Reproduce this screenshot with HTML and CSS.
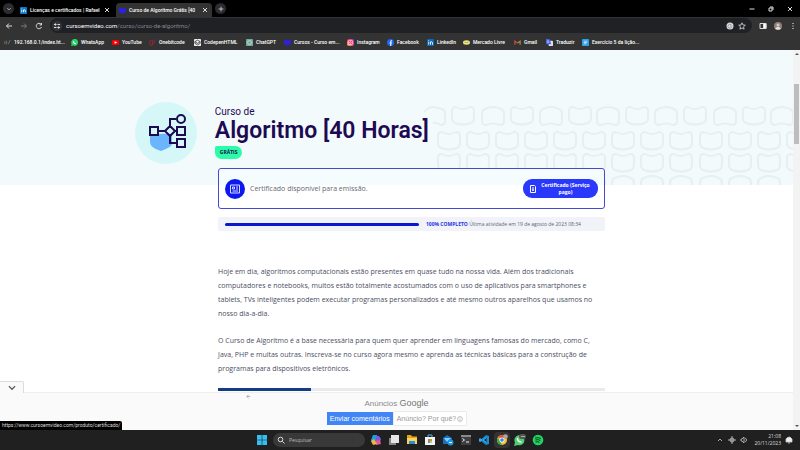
FILE: index.html
```html
<!DOCTYPE html>
<html lang="pt-BR">
<head>
<meta charset="utf-8">
<title>Curso de Algoritmo Grátis</title>
<link rel="stylesheet" href="styles.css">
</head>
<body>
<header class="browser">
  <nav class="tabs">
    <button class="round" aria-label="Pesquisar guias"><svg viewBox="0 0 10 10"><path d="M3 4l2 2 2-2"/></svg></button>
    <div class="tab"><svg class="fav" viewBox="0 0 8 8"><rect width="8" height="8" rx="1" fill="#0a78c8"/><path d="M2 3v3M4 6V3M4 4q2-2 2 0v2M2 1.500v.5" stroke="#fff"/></svg><span class="tab-title">Licenças e certificados | Rafael</span><button class="close" aria-label="Fechar guia"><svg viewBox="0 0 6 6"><path d="M1 1l4 4M5 1l-4 4"/></svg></button></div>
    <div class="tab active"><svg class="fav" viewBox="0 0 8 8"><path d="M0 1l4 .5L8 1v5L4 7.500 0 6z" fill="#2d20e0"/></svg><span class="tab-title">Curso de Algoritmo Grátis [40</span><button class="close" aria-label="Fechar guia"><svg viewBox="0 0 6 6"><path d="M1 1l4 4M5 1l-4 4"/></svg></button></div>
    <button class="round" aria-label="Nova guia"><svg viewBox="0 0 10 10"><path d="M5 2v6M2 5h6"/></svg></button>
    <div class="window-buttons">
      <button aria-label="Minimizar"><svg viewBox="0 0 6 6"><path d="M.5 3h5"/></svg></button>
      <button aria-label="Restaurar"><svg viewBox="0 0 6 6"><path d="M1 2h3v3H1zM2 1h3v3"/></svg></button>
      <button aria-label="Fechar"><svg viewBox="0 0 6 6"><path d="M1 1l4 4M5 1L1 5"/></svg></button>
    </div>
  </nav>
  <div class="toolbar">
    <button aria-label="Voltar"><svg viewBox="0 0 8 8"><path d="M7 4H1.500M4 1.500L1.500 4 4 6.500"/></svg></button>
    <button class="dim" aria-label="Avançar"><svg viewBox="0 0 8 8"><path d="M1 4h5.500M4 1.500L6.500 4 4 6.500"/></svg></button>
    <button aria-label="Recarregar"><svg viewBox="0 0 8 8"><path d="M6.500 5A2.700 2.700 0 1 1 6 2.200M6.500 1v2H4.500"/></svg></button>
    <div class="address">
      <svg class="site" viewBox="0 0 10 10"><circle cx="5" cy="5" r="5" fill="#35363a" stroke="none"/><path d="M2 3.500h2M5.500 3.500H8M2 6.500h2.500M6 6.500h2"/><circle cx="3.500" cy="3.500" r=".7"/><circle cx="6.500" cy="6.500" r=".7"/></svg>
      <a class="url" href="#">cursoemvideo.com<span>/curso/curso-de-algoritmo/</span></a>
      <svg class="small" viewBox="0 0 8 8"><circle cx="4" cy="4" r="3.500" fill="#ddd" stroke="none"/><path d="M5.500 3A2 2 0 1 0 5.800 5" stroke="#8a9cb8"/><path d="M4 4h2.500" stroke="#c08a80"/></svg>
      <svg class="small" viewBox="0 0 8 8"><path d="M4 .8l1 2.200 2.300.2-1.800 1.600.6 2.400L4 5.900 1.900 7.200l.6-2.400L.7 3.200 3 3z" stroke-width=".8"/></svg>
    </div>
    <button aria-label="Painel lateral"><svg viewBox="0 0 8 8"><path d="M1 1.500h6v5H1z"/><path d="M4.500 1.500H7v5H4.500z" fill="#fff"/></svg></button>
    <button class="profile" aria-label="Perfil"><svg viewBox="0 0 8 8"><circle cx="4" cy="4" r="4" fill="#8d817c" stroke="none"/><circle cx="4" cy="3" r="1.500" fill="#e6c4b0" stroke="none"/><path d="M1 6.700q3-4 6 0Q4 9 1 6.700" fill="#e4dfdc" stroke="none"/></svg></button>
    <button aria-label="Menu"><svg viewBox="0 0 8 8"><path d="M4 1v1M4 3.500v1M4 6v1" stroke-width="1.200"/></svg></button>
  </div>
  <nav class="bookmarks">
    <a href="#"><svg viewBox="0 0 8 8"><path d="M1 2v4M3 2v4M5 6l2-5" stroke="#7d8a86" stroke-width=".8"/></svg>192.168.0.1/index.ht...</a>
    <a href="#"><svg viewBox="0 0 8 8"><path d="M0 8l.7-2.200A4 4 0 1 1 2.500 7.500z" fill="#25d366"/><path d="M2.700 2.500q0 3 3 3" stroke="#fff" stroke-width="1.200"/></svg>WhatsApp</a>
    <a href="#"><svg viewBox="0 0 8 8"><rect y="1.200" width="8" height="5.600" rx="1.500" fill="#f00"/><path d="M3 2.500l3 1.500-3 1.500z" fill="#fff"/></svg>YouTube</a>
    <a href="#"><svg viewBox="0 0 8 8"><path d="M1 2h3v5H1zM5 1h1v5" stroke="#9d2635"/></svg>Onebitcode</a>
    <a href="#"><svg viewBox="0 0 8 8"><rect width="8" height="8" rx="1" fill="#eee"/><path d="M4 1.300L7 3v2L4 6.700 1 5V3zM1 3l3 2 3-2" stroke="#222" stroke-width=".8"/></svg>CodepenHTML</a>
    <a href="#"><svg viewBox="0 0 8 8"><rect width="8" height="8" rx="1" fill="#74aa9c"/><circle cx="4" cy="4" r="2.200" stroke="#c5e0d8"/></svg>ChatGPT</a>
    <a href="#"><svg viewBox="0 0 8 8"><path d="M0 1l4 .5L8 1v5L4 7.500 0 6z" fill="#2d20e0"/></svg>Cursos - Curso em...</a>
    <a href="#"><svg viewBox="0 0 8 8"><defs><linearGradient id="ig" x1="0" y1="1" x2="1" y2="0"><stop stop-color="#ffb43b"/><stop offset=".5" stop-color="#f22e6b"/><stop offset="1" stop-color="#a534c4"/></linearGradient></defs><rect width="8" height="8" rx="2" fill="url(#ig)"/><rect x="1.500" y="1.500" width="5" height="5" rx="1.500" stroke="#fff" stroke-width=".8"/><circle cx="4" cy="4" r="1" stroke="#fff" stroke-width=".7"/></svg>Instagram</a>
    <a href="#"><svg viewBox="0 0 8 8"><circle cx="4" cy="4" r="4" fill="#1769ff"/><path d="M5.800 2Q4.300 1.700 4.300 3v5M3 4.500h2.500" stroke="#fff" stroke-width="1.200"/></svg>Facebook</a>
    <a href="#"><svg viewBox="0 0 8 8"><rect width="8" height="8" rx="1" fill="#0a68b8"/><path d="M2 3v3.500M4 6.500V3M4 4q2-2 2.300 0v2.500M2 1.300v.8" stroke="#fff"/></svg>LinkedIn</a>
    <a href="#"><svg viewBox="0 0 8 8"><ellipse cx="4" cy="4" rx="4" ry="2.500" fill="#f4e67a"/><path d="M1.500 3.500Q4 5 6.500 3.500" stroke="#8a907c" stroke-width=".8"/></svg>Mercado Livre</a>
    <a href="#"><svg viewBox="0 0 8 8"><path d="M1 6.500v-4L4 4.700" stroke="#dc4b3e" stroke-width="1.300"/><path d="M4 4.700l3-2.200v4" stroke="#b78e35" stroke-width="1.300"/></svg>Gmail</a>
    <a href="#"><svg viewBox="0 0 8 8"><rect x="3" y="2" width="5" height="6" rx="1" fill="#e0e2e8"/><path d="M0 0h4l2 6H0z" fill="#4565e8"/><path d="M3.500 2.500q-2-1.500-2 .5t2 .7" stroke="#fff" stroke-width=".6"/></svg>Traduzir</a>
    <a href="#"><svg viewBox="0 0 8 8"><rect width="8" height="8" rx="1" fill="#2c9fe8"/><path d="M2 2.500h4M2 4h4M2 5.500h3" stroke="#e8f7ff" stroke-width=".8"/></svg>Exercício 5 da lição...</a>
  </nav>
</header>

<div class="viewport">
  <main class="page">
    <section class="hero">
      <svg class="pattern" viewBox="0 0 370 79" aria-hidden="true">
        <defs>
          <path id="cup" d="M4 1Q11 5 18 1q4 0 4 4v7q0 4-3 5-8 3-16 0-3-1-3-5V5q0-4 4-4z"/>
          <path id="cap" d="M4 19Q11 16 18 19q4 0 4-4V8q0-4-3-5-8-4-16 0Q0 4 0 8v7q0 4 4 4z"/>
          <g id="row"><use href="#cup"/><use href="#cup" x="29"/><use href="#cup" x="58"/><use href="#cup" x="87"/><use href="#cup" x="116"/><use href="#cup" x="145"/><use href="#cup" x="174"/><use href="#cup" x="203"/><use href="#cup" x="232"/><use href="#cup" x="262"/><use href="#cup" x="291"/><use href="#cup" x="320"/><use href="#cup" x="349"/></g>
        </defs>
        <path d="M1 6q4-5 10-5l8 2q3 1 3 5v7q0 4-4 4-5-3-8-2"/>
        <use href="#cup" x="29"/><use href="#cap" x="59"/><use href="#cup" x="88"/><use href="#cap" x="117"/><use href="#cup" x="146"/><use href="#cap" x="174"/><use href="#cup" x="203"/><use href="#cap" x="232"/><use href="#cup" x="261"/><use href="#cap" x="291"/><use href="#cup" x="320"/><use href="#cap" x="348"/>
        <use href="#row" x="15" y="25"/><use href="#row" x="15" y="47"/>
        <g><use href="#cap" x="15" y="69"/><use href="#cap" x="44" y="69"/><use href="#cap" x="73" y="69"/><use href="#cap" x="102" y="69"/><use href="#cap" x="131" y="69"/><use href="#cap" x="160" y="69"/><use href="#cap" x="189" y="69"/><use href="#cap" x="218" y="69"/><use href="#cap" x="247" y="69"/><use href="#cap" x="277" y="69"/><use href="#cap" x="306" y="69"/><use href="#cap" x="335" y="69"/></g>
      </svg>
      <svg class="course-icon" viewBox="0 0 62 62" aria-hidden="true">
        <circle cx="31" cy="31" r="31" fill="#d5f7f8"/>
        <path d="M15 33q11-2 22-1v10q0 3-11 7-11-3-11-9z" fill="#6bb5ff"/>
        <g fill="none" stroke="#1e0a52" stroke-width="2"><path d="M15 25h8v8h-8zM23 29h7M30 29l5-5 5 5-5 5zM40 29h2M42 25h8v8h-8zM42 37h8v8h-8zM35 24v-7h6M35 34v7h7"/><circle cx="46" cy="17" r="4"/></g>
      </svg>
      <div class="heading"><p>Curso de</p><h1>Algoritmo [40 Horas]</h1><span class="free">GRÁTIS</span></div>
    </section>
    <article class="content">
      <section class="certificate">
        <svg class="cert-icon" viewBox="0 0 20 20"><circle cx="10" cy="10" r="10" fill="#0b19f0"/><path d="M5.500 6h9v8h-9zM7.500 8h2v2h-2zM11 8h2M11 10h2M7.500 12h5.500" fill="none" stroke="#d8dcff"/></svg>
        <p>Certificado disponível para emissão.</p>
        <button><svg viewBox="0 0 8 8"><path d="M1.500.5h4l1 1v6h-5zM4 2v4M3 5h2" fill="none" stroke="#fff"/></svg><span>Certificado (Serviço pago)</span></button>
      </section>
      <section class="progress">
        <div class="track"></div>
        <p><strong>100% COMPLETO</strong> Última atividade em 19 de agosto de 2023 08:34</p>
      </section>
      <div class="text">
        <p>Hoje em dia, algoritmos computacionais estão presentes em quase tudo na nossa vida. Além dos tradicionais<br>computadores e notebooks, muitos estão totalmente acostumados com o uso de aplicativos para smartphones e<br>tablets, TVs inteligentes podem executar programas personalizados e até mesmo outros aparelhos que usamos no<br>nosso dia-a-dia.</p>
        <p>O Curso de Algoritmo é a base necessária para quem quer aprender em linguagens famosas do mercado, como C,<br>Java, PHP e muitas outras. Inscreva-se no curso agora mesmo e aprenda as técnicas básicas para a construção de<br>programas para dispositivos eletrônicos.</p>
      </div>
      <div class="section-line"><span></span></div>
    </article>
    <aside class="ad">
      <button class="collapse" aria-label="Recolher anúncio"><svg viewBox="0 0 8 8"><path d="M1.500 2.500L4 5l2.500-2.500"/></svg></button>
      <svg class="back" viewBox="0 0 6 6"><path d="M1 3h4M3 1L1 3l2 2"/></svg>
      <p class="ad-title">Anúncios <b>Google</b></p>
      <div class="ad-actions"><button class="send">Enviar comentários</button><button class="why">Anúncio? Por quê? <svg viewBox="0 0 6 6"><circle cx="3" cy="3" r="2.400"/><path d="M3 2.500v2M3 1.300v.6"/></svg></button></div>
    </aside>
    <div class="status">https://www.cursoemvideo.com/produto/certificado/</div>
  </main>
  <div class="scroll" aria-hidden="true"><i class="up"></i><span class="thumb"></span><i class="down"></i></div>
</div>

<footer class="taskbar">
  <div class="apps">
    <svg viewBox="0 0 12 12"><path d="M1 1h4.700v4.700H1zM6.300 1H11v4.700H6.300zM1 6.300h4.700V11H1zM6.300 6.300H11V11H6.300z" fill="#35bdf4"/></svg>
    <label class="search"><svg viewBox="0 0 8 8"><circle cx="3.500" cy="3.500" r="2.300"/><path d="M5.300 5.300L7.500 7.500"/></svg><input type="text" placeholder="Pesquisar" aria-label="Pesquisar"></label>
    <svg viewBox="0 0 12 12"><path d="M3 1h4l1 3-4 5H2L1 6z" fill="#1d9de0"/><path d="M6 2h3l2 3-1 3H6z" fill="#7a5be0"/><path d="M5 7l5-1 1 4-5 1z" fill="#e5559a"/><path d="M1 7l3-2 3 5-4 1z" fill="#efb638"/></svg>
    <svg viewBox="0 0 12 12"><path d="M1 4h7v7H1z" fill="#858585"/><path d="M3 1h8v8H3z" fill="#e6e6e6"/></svg>
    <svg viewBox="0 0 12 12"><path d="M1 1h4l1 1.500h5V10H1z" fill="#e5a413"/><path d="M1 4h10v6H1z" fill="#ffd35a"/><path d="M3 7h6v3H3z" fill="#278edb"/></svg>
    <svg viewBox="0 0 12 12"><path d="M4 3V1h4v2" fill="none" stroke="#49b5e8"/><path d="M1 3h10v8H1z" fill="#f4f4f4"/><path d="M4 5h2v2H4z" fill="#ec6547"/><path d="M6 5h2v2H6z" fill="#7fbb42"/><path d="M4 7h2v2H4z" fill="#38a1e8"/><path d="M6 7h2v2H6z" fill="#f3bd3c"/></svg>
    <svg viewBox="0 0 12 12"><path d="M1 4l4-3 5 3v6H1z" fill="#1472c4"/><path d="M2 4h7L5 8z" fill="#8fcdf7"/><circle cx="8.500" cy="8.500" r="3" fill="#1a96e8"/><path d="M7 8.500h3" stroke="#fff"/></svg>
    <svg viewBox="0 0 12 12"><path d="M1 1h10v10H1z" fill="#3c3e42"/><path d="M1 1h10v2H1z" fill="#8a8a8a"/><path d="M2.500 4.500l2 1.500-2 1.500M6 8h3" fill="none" stroke="#eee"/></svg>
    <svg viewBox="0 0 12 12"><path d="M8 1l3 1v8l-3 1-5-4-1.500 1L1 7l6-5z" fill="#168bd2"/><path d="M1 5l1-1 6 5V3L2 8 1 7z" fill="#39a9ef"/><path d="M8.500 4v4L6 6z" fill="#202020"/></svg>
    <span class="running"><svg viewBox="0 0 12 12"><circle cx="6" cy="6" r="5" fill="#f3c52f"/><path d="M1.700 3.500A5 5 0 0 1 10.500 4H6z" fill="#e34a39"/><path d="M1.700 3.500L4 7l2 4A5 5 0 0 1 1.700 3.500" fill="#35a853"/><circle cx="6" cy="6" r="2.500" fill="#fff"/><circle cx="6" cy="6" r="1.800" fill="#3c83ed"/><circle cx="9.500" cy="2.500" r="2.300" fill="#b4a49b"/></svg></span>
    <svg viewBox="0 0 12 12"><path d="M0 12l1-3.500A5 5 0 1 1 4 11z" fill="#4fcf72"/><path d="M3.500 4q0 4 4 4" fill="none" stroke="#fff" stroke-width="1.500"/><rect x="5" width="7" height="5" rx="2.500" fill="#555"/><path d="M7 2.500h4" stroke="#aaa"/></svg>
    <span class="running plain"><svg viewBox="0 0 12 12"><circle cx="6" cy="6" r="5.300" fill="#1ed760"/><path d="M3 4q3-1 6 .5M3.300 6q3-1 5 .5M3.500 8q2.500-.7 4 .3" fill="none" stroke="#173821"/></svg></span>
  </div>
  <div class="tray"><svg viewBox="0 0 8 8"><path d="M2 5l2-2 2 2"/></svg><svg viewBox="0 0 8 8"><circle cx="4" cy="4" r="2"/><path d="M0 4h8M4 0v8"/></svg><svg viewBox="0 0 8 8"><path d="M1 3h1l2-2v6L2 5H1zM5.500 2q2 2 0 4"/></svg><time>21:08<br>20/11/2023</time><svg class="bell" viewBox="0 0 8 8"><path d="M1 6V3q1-2 4-2l2 2v3zM3 7h2" fill="#eee"/></svg></div>
</footer>
</body>
</html>
```
FILE: styles.css
```css
* { box-sizing: border-box; }
body { margin: 0; height: 100vh; display: flex; flex-direction: column; overflow: hidden; font-family: "Open Sans", sans-serif; background: #fff; }
button { border: 0; padding: 0; margin: 0; background: none; color: inherit; font: inherit; display: flex; align-items: center; justify-content: center; }
p, h1 { margin: 0; }
a { color: inherit; text-decoration: none; }
svg { display: block; flex: none; }

.browser { flex: none; color: #fff; background: #333; }
.browser svg { fill: none; }
.browser button svg, .address svg { stroke: #ddd; }
.tabs { height: 17px; background: #000; display: flex; align-items: center; padding: 0 4px 0 3px; }
.round { width: 11px; height: 11px; border-radius: 50%; background: #2b2c2f; }
.round svg { width: 8px; height: 8px; }
.tab { display: flex; align-items: center; gap: 3px; width: 96px; height: 14px; align-self: flex-end; margin-left: 2px; padding: 0 1px 0 4px; font: 500 5px/8px Roboto, sans-serif; }
.tab.active { background: #333; border-radius: 4px 4px 0 0; margin: 0 3px 0 4px; padding: 0 3px; }
.fav { width: 7px; height: 7px; }
.tab-title { flex: 1; white-space: nowrap; }
.close { width: 8px; height: 8px; }
.close svg, .window-buttons svg { width: 6px; height: 6px; }
.window-buttons { display: flex; gap: 13px; margin-left: auto; padding-right: 3px; }

.toolbar { height: 17px; display: flex; align-items: center; gap: 7px; padding: 0 3px 0 5px; }
.toolbar button { width: 8px; }
.toolbar button svg, .small { width: 8px; height: 8px; }
.toolbar .dim { opacity: .4; }
.address { flex: 1; height: 15px; border-radius: 8px; background: #202124; display: flex; align-items: center; gap: 4px; padding: 0 6px 0 2px; }
.site { width: 10px; height: 10px; }
.url { flex: 1; font: 6px/10px Roboto, sans-serif; }
.url span { color: #85878a; }
.bookmarks { height: 16px; padding: 0 4px; display: grid; grid-template-columns: 67px 41px 37px 45px 52px 38px 63px 40px 40px 36px 51px 32px 36px 1fr; align-items: center; font: 500 5px/8px Roboto, sans-serif; }
.bookmarks a { display: flex; align-items: center; gap: 3px; white-space: nowrap; }
.bookmarks svg { width: 7px; height: 7px; }

.viewport { flex: 1; min-height: 0; display: flex; }
.page { flex: 1; min-width: 0; position: relative; overflow: hidden; }
.hero { position: relative; height: 135px; background: #f2fafc; display: flex; gap: 18px; padding: 52px 0 0 17%; }
.pattern { position: absolute; right: 0; bottom: 0; width: 370px; height: 79px; fill: none; stroke: #e6eff1; stroke-width: 2; }
.course-icon { width: 62px; height: 62px; position: relative; }
.heading { position: relative; padding-top: 4px; font-family: Roboto, sans-serif; color: #1e0a52; }
.heading p { font-size: 10px; line-height: 12px; }
.heading h1 { font-size: 23px; line-height: 25px; font-weight: 600; }
.free { display: block; width: fit-content; margin-top: 3px; background: #2bfca8; border-radius: 2px 7px 7px 7px; padding: 0 5px; font: bold 5px/13px "Open Sans", sans-serif; }
.content { position: relative; width: 387px; margin: -17px auto 0; left: 15px; }
.certificate { height: 41px; border: 1px solid #4548d0; border-radius: 3px; background: linear-gradient(#f5fcfd 16px, #fff 16px); display: flex; align-items: center; gap: 5px; padding: 0 6px; }
.cert-icon { width: 20px; height: 20px; }
.certificate p { flex: 1; font-size: 7px; line-height: 12px; color: #646876; }
.certificate button { width: 75px; height: 19px; border-radius: 9px; background: #2939fb; color: #fff; gap: 2px; font-size: 5px; line-height: 7px; font-weight: bold; padding: 0 6px; }
.certificate button span { flex: 1; }
.certificate button svg { width: 8px; height: 8px; }
.progress { height: 14px; margin-top: 8px; border-radius: 2px; background: #f1f3f8; display: flex; align-items: center; gap: 7px; padding: 0 7px; }
.track { width: 52%; height: 3px; border-radius: 2px; background: #0b17cf; }
.progress p { font-size: 5px; line-height: 8px; color: #606470; white-space: nowrap; }
.progress strong { color: #2632df; font-weight: bold; }
.text { margin-top: 34px; font-size: 7px; line-height: 14px; color: #4b4e63; white-space: nowrap; }
.text p + p { margin-top: 13px; }
.section-line { margin-top: 12px; height: 3px; background: #e9eaec; }
.section-line span { display: block; width: 24%; height: 3px; background: #153d85; }

.ad { position: absolute; inset: auto 0 0; height: 38px; background: #fafafa; border-top: 1px solid #eee; padding-top: 4px; text-align: center; font-family: "Liberation Sans", sans-serif; }
.collapse { position: absolute; left: 0; bottom: 100%; width: 24px; height: 12px; background: #fafafa; border: solid #ddd; border-width: 1px 1px 0 0; border-radius: 0 2px 0 0; }
.collapse svg { width: 10px; height: 10px; fill: none; stroke: #555; }
.back { position: absolute; left: 246px; top: 1px; width: 5px; height: 5px; fill: none; stroke: #aaa; }
.ad-title { font-size: 8px; line-height: 12px; color: #8b8b8b; }
.ad-title b { font-size: 9px; font-weight: normal; color: #757575; }
.ad-actions { display: flex; justify-content: center; gap: 1px; margin-top: 2px; font-size: 7px; line-height: 13px; }
.ad-actions button { height: 13px; padding: 0 3px; }
.send { background: #4285f4; color: #fff; }
.ad-actions .why { background: #fff; color: #999; box-shadow: 0 0 1px #999; gap: 1px; }
.why svg { width: 6px; height: 6px; fill: none; stroke: #999; stroke-width: .6; }
.status { position: absolute; left: 0; bottom: 0; background: #000; color: #ddd; padding: 0 2px; border-radius: 0 2px 0 0; font: 5px/9px Roboto, sans-serif; }
.scroll { width: 7px; background: #f3f3f3; display: flex; flex-direction: column; align-items: center; padding: 3px 0; }
.thumb { width: 5px; height: 60px; background: #bdbdbd; margin-top: 29px; }
.up, .down { border: 2px solid transparent; }
.up { border-bottom-color: #555; border-top: 0; }
.down { border-top-color: #555; border-bottom: 0; margin-top: auto; }

.taskbar { flex: none; height: 20px; background: #202020; display: flex; justify-content: center; align-items: center; position: relative; color: #ddd; }
.apps { display: flex; align-items: center; gap: 6px; }
.apps > svg, .running svg { width: 12px; height: 12px; }
.search { width: 92px; height: 14px; border-radius: 7px; background: #393939; display: flex; align-items: center; gap: 4px; padding: 0 4px; margin: 0 -1px; }
.search svg { width: 8px; height: 8px; fill: none; stroke: #ddd; }
.search input { min-width: 0; width: 70px; padding: 0; border: 0; outline: 0; background: none; color: #ccc; font: 5px/10px "Open Sans", sans-serif; }
.search input::placeholder { color: #bbb; opacity: 1; }
.running { background: #333; border-radius: 2px; box-shadow: 0 0 0 2px #333; }
.running.plain { background: none; box-shadow: none; }
.tray { position: absolute; right: 7px; display: flex; align-items: center; gap: 4px; }
.tray svg { width: 8px; height: 8px; fill: none; stroke: #ccc; stroke-width: .8; }
.tray time { text-align: right; font: 5px/7px "Open Sans", sans-serif; padding-left: 2px; }
```
